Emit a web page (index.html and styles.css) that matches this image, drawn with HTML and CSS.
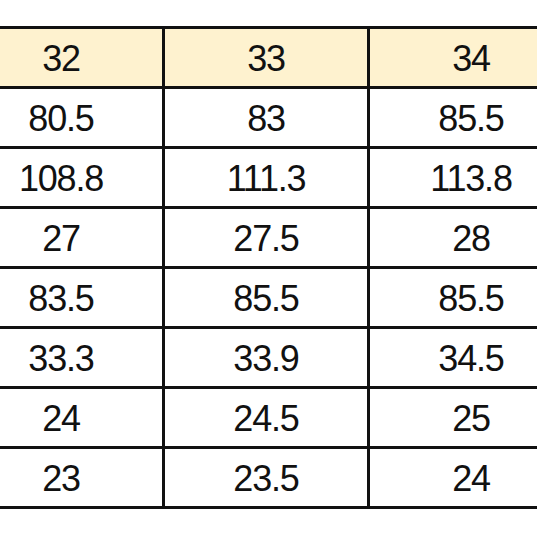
FILE: index.html
```html
<!DOCTYPE html>
<html lang="ja">
<head>
<meta charset="utf-8">
<title>サイズ表</title>
<link rel="stylesheet" href="styles.css">
</head>
<body>
<div class="sheet">
  <div class="grid">
    <div class="cell head">32</div><div class="cell head">33</div><div class="cell head">34</div>
    <div class="cell">80.5</div><div class="cell">83</div><div class="cell">85.5</div>
    <div class="cell">108.8</div><div class="cell">111.3</div><div class="cell">113.8</div>
    <div class="cell">27</div><div class="cell">27.5</div><div class="cell">28</div>
    <div class="cell">83.5</div><div class="cell">85.5</div><div class="cell">85.5</div>
    <div class="cell">33.3</div><div class="cell">33.9</div><div class="cell">34.5</div>
    <div class="cell">24</div><div class="cell">24.5</div><div class="cell">25</div>
    <div class="cell">23</div><div class="cell">23.5</div><div class="cell">24</div>
  </div>
</div>
</body>
</html>
```
FILE: styles.css
```css
html, body {
  margin: 0;
  padding: 0;
  background: #ffffff;
  overflow: hidden;
}
.sheet {
  width: 537px;
  height: 537px;
  overflow: hidden;
  padding-top: 26px;
  box-sizing: border-box;
}
.grid {
  display: grid;
  grid-template-columns: repeat(3, 202px);
  grid-auto-rows: 57px;
  gap: 3px;
  padding: 3px;
  background: #111111;
  width: max-content;
  margin-left: -43px;
}
.cell {
  background: #ffffff;
  display: flex;
  align-items: center;
  justify-content: center;
  padding-top: 3px;
  box-sizing: border-box;
  font-family: "Liberation Sans", Arial, sans-serif;
  font-size: 36px;
  letter-spacing: -1.2px;
  color: #111111;
}
.head {
  background: #fef2cf;
}
```
